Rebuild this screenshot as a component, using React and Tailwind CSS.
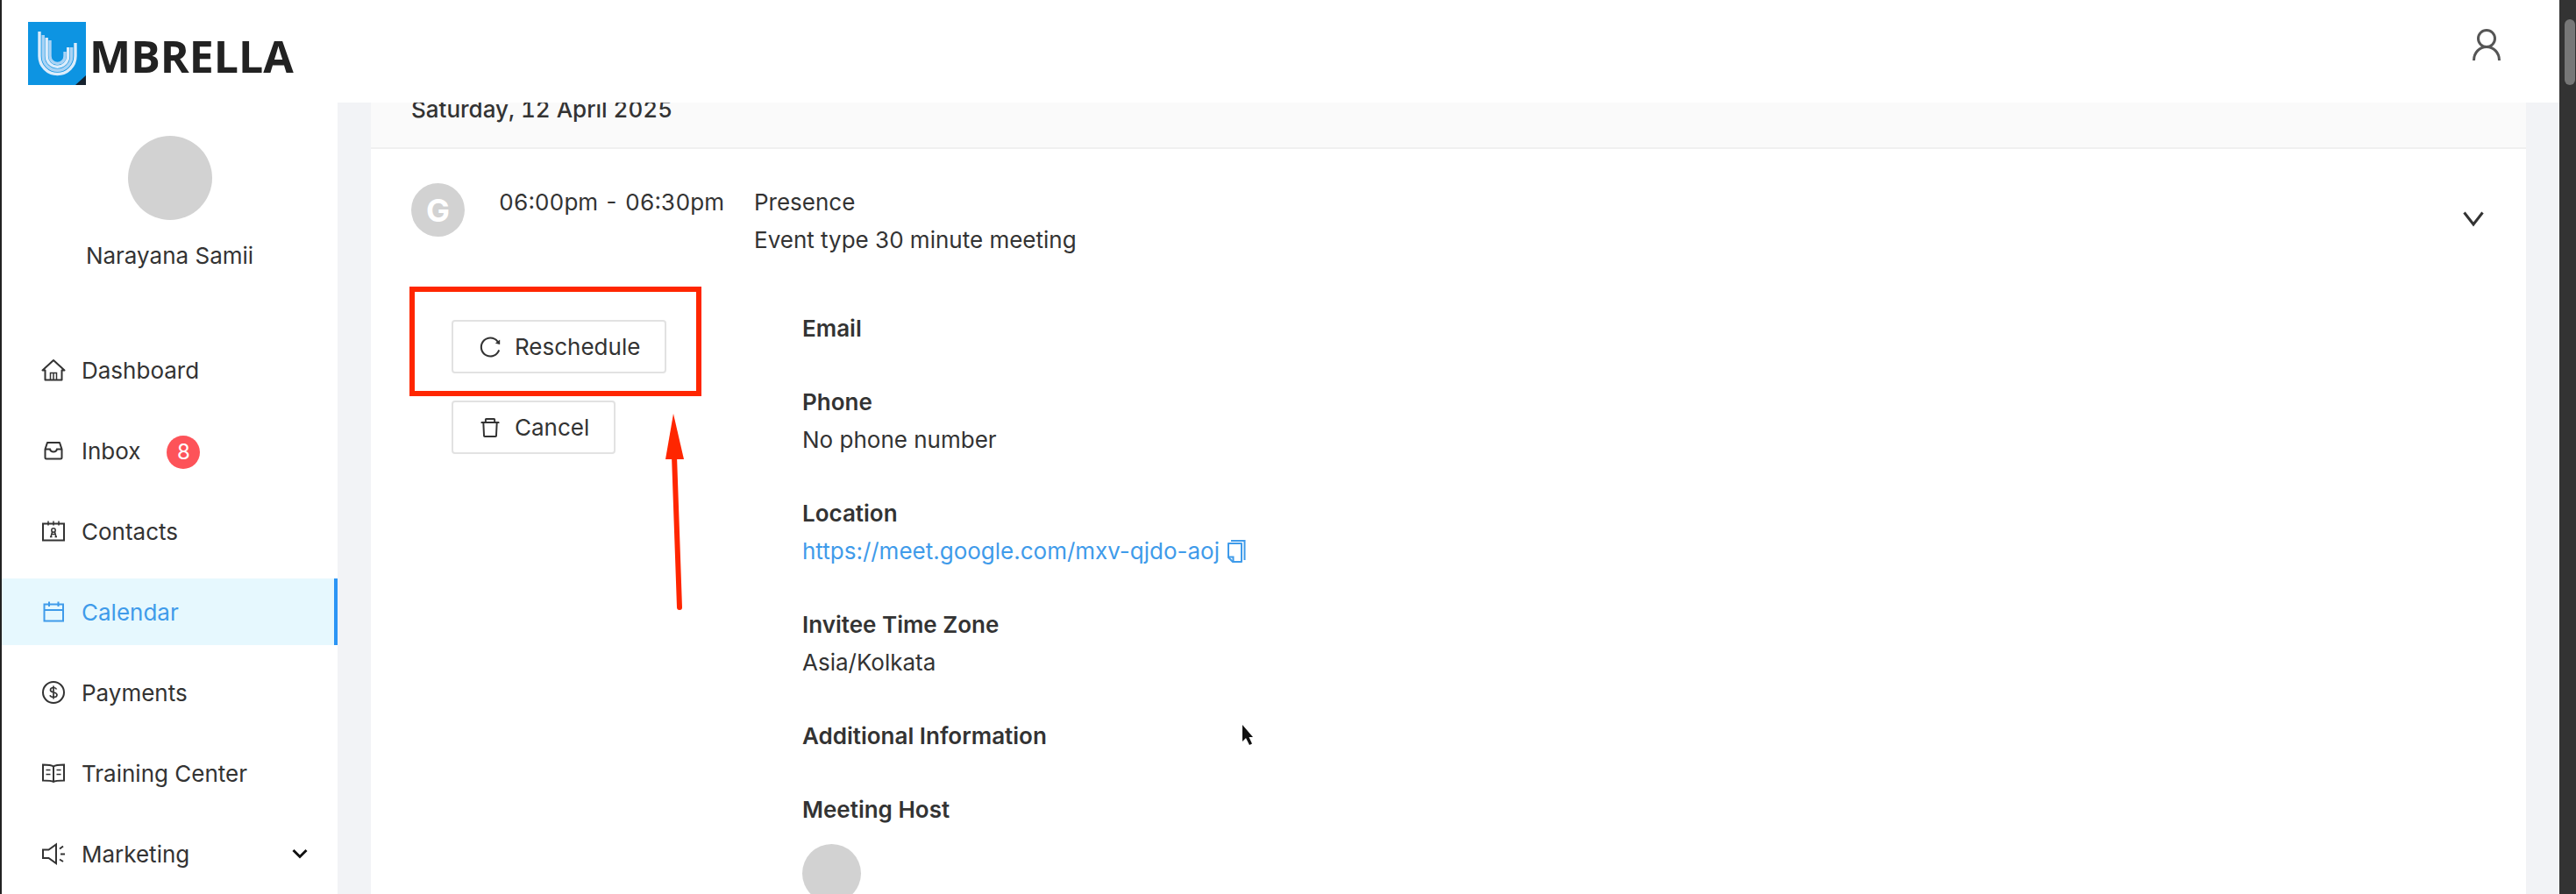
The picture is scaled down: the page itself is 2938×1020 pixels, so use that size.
import React, { useState } from 'react';
import clsx from 'clsx';
import { AiOutlineDelete, AiOutlineReload } from 'react-icons/ai';

const strokeProps = {
  fill: 'none',
  stroke: 'currentColor',
  strokeWidth: 2,
  viewBox: '0 0 28 28',
  'aria-hidden': true,
};

const HomeIcon = (props) => (
  <svg {...strokeProps} {...props}>
    <path d="M1.5 14.5 14 3l12.500 11.500H23.500V25.500H4.500V14.500z" strokeLinejoin="round" />
    <path d="M10.500 25v-7.500h7V25M14 18v7" strokeWidth="1.500" />
  </svg>
);

const InboxIcon = (props) => (
  <svg {...strokeProps} {...props}>
    <path d="M7 5h14l2.500 7.500V22a1.500 1.500 0 0 1-1.500 1.500H6A1.500 1.500 0 0 1 4.500 22v-9.500z" strokeLinejoin="round" />
    <path d="M4.500 12.500h5.500c.5 2 2 3 4 3s3.500-1 4-3h5.500" />
  </svg>
);

const ContactsIcon = (props) => (
  <svg {...strokeProps} {...props}>
    <path d="M2 5.500h24v19H2z" />
    <path d="M8 2.500v5M14 2.500v5M20 2.500v5" strokeWidth="1.500" />
    <g strokeWidth="1.500">
      <circle cx="14" cy="13" r="2.200" />
      <path d="M10 20.500h2.500M15.500 20.500h2.500M12.500 15l-1.500 5.500M15.500 15l1.500 5.500M12 17.500h4" />
    </g>
  </svg>
);

const CalendarIcon = (props) => (
  <svg {...strokeProps} {...props}>
    <path d="M3.500 5.500h21.500v19H3.500zM3.500 12h21.500M9 2.500v5.500M19.500 2.500v5.500" />
  </svg>
);

const PaymentsIcon = (props) => (
  <svg {...strokeProps} {...props}>
    <circle cx="14" cy="14" r="12" />
    <path d="M17.500 10.500c-.5-1.300-1.700-2-3.500-2-2 0-3.500 1-3.500 2.700 0 3.800 7.500 1.800 7.500 5.600 0 1.700-1.700 2.700-4 2.700-2 0-3.500-.8-4-2.200M14 6.500v15" strokeWidth="1.700" />
  </svg>
);

const TrainingIcon = (props) => (
  <svg {...strokeProps} {...props}>
    <path d="M14 6.500C12 5 9 4.500 2 4.500v18c7 0 10 0 12 1.500 2-1.500 5-1.500 12-1.500v-18c-7 0-10 .5-12 2zV24" />
    <path d="M5.500 10.500h5M5.500 15.500h5M17.500 10.500h5M17.500 15.500h5" strokeWidth="1.700" />
  </svg>
);

const MarketingIcon = (props) => (
  <svg {...strokeProps} {...props}>
    <path d="M17 3.500v21.500L8.500 19H2v-9.500h6.500z" />
    <path d="M21 8.500l4-3M22 14.500h5M21 20.500l4 2.500" />
  </svg>
);

const UserIcon = (props) => (
  <svg viewBox="0 0 34 38" fill="none" stroke="currentColor" strokeWidth="3" aria-hidden="true" {...props}>
    <circle cx="17" cy="11" r="9.500" />
    <path d="M2.500 36c0-9 6.500-15.500 14.500-15.500S31.500 27 31.500 36" />
  </svg>
);

const CopyIcon = (props) => (
  <svg viewBox="0 0 22 28" fill="none" stroke="currentColor" strokeWidth="2" aria-hidden="true" {...props}>
    <path d="M5 2h15.500v22" />
    <path d="M17 5v21H7l-5-5V5z" strokeLinejoin="round" />
    <path d="M2 20.500h5.500V26" />
  </svg>
);

const Logo = () => (
  <a href="#" className="flex items-end gap-1 text-[#222]">
    <svg viewBox="0 0 66 72" className="w-[66px] h-[72px]" aria-hidden="true">
      <path d="M0 0h66v72H0z" fill="#0d94e2" />
      <path d="M66 61v11H54z" fill="#16222e" />
      <g fill="none" stroke="#dcecfb" strokeWidth="3.400">
        <path d="M13 11v28a20 20 0 0 0 41 0V24" />
        <path d="M17.200 15v24a16 16 0 0 0 32.500 0V29" stroke="#a9d3f5" />
        <path d="M21.200 18v21a12 12 0 0 0 24.500 0V29" />
        <path d="M25 21v18a8.500 8.500 0 0 0 17 0v-5" stroke="#a9d3f5" />
      </g>
    </svg>
    <span className="font-['Open_Sans',sans-serif] text-[50px] leading-[66px] font-bold">MBRELLA</span>
  </a>
);

const menuItems = [
  { label: 'Dashboard', icon: HomeIcon },
  { label: 'Inbox', icon: InboxIcon, badge: 8 },
  { label: 'Contacts', icon: ContactsIcon },
  { label: 'Calendar', icon: CalendarIcon },
  { label: 'Payments', icon: PaymentsIcon },
  { label: 'Training Center', icon: TrainingIcon },
  { label: 'Marketing', icon: MarketingIcon, expandable: true },
];

const details = [
  { title: 'Email' },
  { title: 'Phone', value: 'No phone number' },
  { title: 'Location', link: 'https://meet.google.com/mxv-qjdo-aoj' },
  { title: 'Invitee Time Zone', value: 'Asia/Kolkata' },
  { title: 'Additional Information' },
  { title: 'Meeting Host', avatar: true },
];

function Sidebar({ active, onSelect }) {
  return (
    <aside className="w-[383px] shrink-0 bg-white">
      <div className="flex flex-col items-center pt-[38px]">
        <div className="size-24 rounded-full bg-[#d2d2d2]" />
        <p className="mt-5 leading-[42px]">Narayana Samii</p>
      </div>
      <nav className="mt-[71px] flex flex-col gap-4">
        {menuItems.map(({ label, icon: Icon, badge, expandable }) => (
          <a
            key={label}
            href="#"
            onClick={() => onSelect(label)}
            className={clsx(
              'flex h-[76px] items-center border-r-4 pl-[45px] pr-[30px]',
              active === label ? 'border-[#2b95f5] bg-[#e6f8fe] text-[#3f9bea]' : 'border-transparent'
            )}
          >
            <Icon className="mr-[18px] size-7 shrink-0" />
            {label}
            {badge && (
              <span className="mt-1 ml-[30px] flex size-[38px] items-center justify-center rounded-full bg-[#fd5359] text-2xl text-white">
                {badge}
              </span>
            )}
            {expandable && (
              <svg viewBox="0 0 18 12" className="ml-auto h-3 w-[18px]" fill="none" stroke="#111" strokeWidth="3" aria-hidden="true">
                <path d="M1.500 2 9 9.500 16.500 2" />
              </svg>
            )}
          </a>
        ))}
      </nav>
    </aside>
  );
}

function ActionButton({ icon: Icon, children }) {
  return (
    <button type="button" className="flex h-[61px] items-center gap-3.5 rounded-sm border-2 border-[#e2e2e2] bg-white px-7">
      <Icon className="size-7" />
      {children}
    </button>
  );
}

function Detail({ title, value, link, avatar }) {
  return (
    <div>
      <h3 className="font-semibold">{title}</h3>
      {value && <p>{value}</p>}
      {link && (
        <p className="flex items-center gap-2 text-[#3f9bea]">
          <a href={link}>{link}</a>
          <button type="button" aria-label="Copy link">
            <CopyIcon className="h-7 w-[22px]" />
          </button>
        </p>
      )}
      {avatar && <div className="mt-[18px] size-[67px] rounded-full bg-[#d2d2d2]" />}
    </div>
  );
}

function EventCard() {
  return (
    <section className="-mt-[37px] min-h-full bg-white leading-[43px]">
      <h2 className="flex h-[90px] items-center border-b-2 border-[#f0f0f0] bg-[#fafafa] px-[46px] font-medium tabular-nums">
        Saturday, 12 April 2025
      </h2>

      <div className="flex items-start px-[46px] pt-[39px]">
        <div className="flex size-[61px] items-center justify-center rounded-full bg-[#d2d2d2] text-4xl font-bold text-white">
          G
        </div>
        <p className="ml-[39px] w-[291px] tabular-nums">06:00pm - 06:30pm</p>
        <div>
          <p>Presence</p>
          <p>Event type 30 minute meeting</p>
        </div>
        <button type="button" aria-label="Collapse event" className="mt-8 mr-0.5 ml-auto">
          <svg viewBox="0 0 24 18" className="h-[18px] w-6" fill="none" stroke="currentColor" strokeWidth="3" aria-hidden="true">
            <path d="M1.500 1.500 12 15l10.500-13.500" />
          </svg>
        </button>
      </div>

      <div className="relative mt-[58px] flex pl-[92px]">
        <div className="flex w-[400px] flex-col items-start gap-[31px] pt-3">
          <div className="relative">
            <ActionButton icon={AiOutlineReload}>Reschedule</ActionButton>
            <div className="pointer-events-none absolute -top-[38px] -right-10 -bottom-[26px] -left-12 border-6 border-[#ff2600]" />
          </div>
          <ActionButton icon={AiOutlineDelete}>Cancel</ActionButton>
        </div>
        <div className="flex flex-col gap-[41px]">
          {details.map((item) => (
            <Detail key={item.title} {...item} />
          ))}
        </div>

        {/* Arrow pointing at the reschedule action */}
        <svg viewBox="0 0 24 226" className="pointer-events-none absolute top-[119px] left-[335px] h-[226px] w-6" aria-hidden="true">
          <path d="M11 48l6 173" stroke="#ff2600" strokeWidth="6" strokeLinecap="round" />
          <path d="M10 0l12 52H1z" fill="#ff2600" />
        </svg>

        {/* Mouse pointer */}
        <svg viewBox="0 0 14 26" className="pointer-events-none absolute top-[473px] left-[993px] h-[26px] w-3.5" aria-hidden="true">
          <path d="M1 1v19l4-4 4 8 3-1.500-3.500-7.500H13z" fill="#111" />
        </svg>
      </div>
    </section>
  );
}

export default function App() {
  const [active, setActive] = useState('Calendar');

  return (
    <div className="flex h-screen overflow-hidden border-l-2 border-[#222] bg-white font-[Inter,sans-serif] text-[26px] text-[#333]">
      <div className="flex min-w-0 flex-1 flex-col">
        <header className="flex h-[117px] shrink-0 items-start justify-between bg-white pt-[25px] pr-[66px] pl-[30px]">
          <Logo />
          <button type="button" aria-label="Account" className="mt-2 text-[#555]">
            <UserIcon className="h-[38px] w-[34px]" />
          </button>
        </header>
        <div className="flex min-h-0 flex-1">
          <Sidebar active={active} onSelect={setActive} />
          <main className="min-w-0 flex-1 overflow-hidden bg-[#f2f3f6] px-[38px]">
            <EventCard />
          </main>
        </div>
      </div>
      <div className="w-[19px] shrink-0 bg-[#333] pt-[22px] pl-1.5">
        <div className="h-[75px] w-3 rounded-full bg-[#777]" />
      </div>
    </div>
  );
}
